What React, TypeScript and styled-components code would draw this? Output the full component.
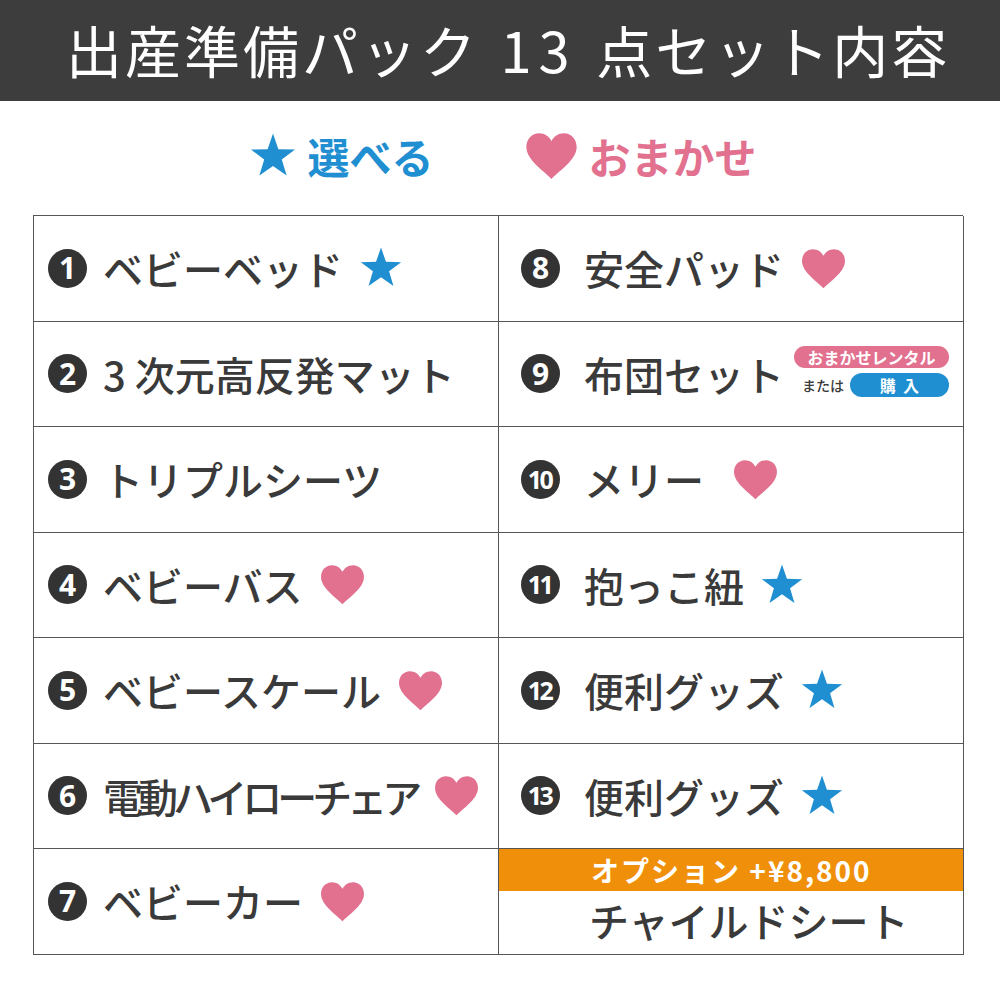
import React from "react";
import styled, { createGlobalStyle } from "styled-components";

const COLORS = {
  Dark: "#3d3d3d",
  Text: "#3a3a3a",
  Line: "#555555",
  Blue: "#1f8fd2",
  Pink: "#e2708f",
  Orange: "#f0900a",
};

const GlobalStyle = createGlobalStyle`
  html, body {
    margin: 0;
    padding: 0;
    background: #ffffff;
  }
  body {
    font-family: "Noto Sans CJK JP", "Noto Sans", sans-serif;
    color: ${COLORS.Text};
  }
  * {
    box-sizing: border-box;
  }
`;

const Page = styled.div`
  width: 1000px;
  height: 1000px;
  display: flex;
  flex-direction: column;
  background: #ffffff;
`;

const Header = styled.header`
  height: 101px;
  background: ${COLORS.Dark};
  display: flex;
  align-items: center;
  justify-content: center;
  padding-left: 16px;
  padding-bottom: 4px;
`;

const Title = styled.h1`
  margin: 0;
  font-weight: 400;
  font-size: 56px;
  line-height: 1;
  letter-spacing: 3px;
  color: #ffffff;
  white-space: nowrap;
`;

const Digits = styled.span`
  letter-spacing: 7px;
  margin-left: 2px;
`;

const Legend = styled.div`
  height: 114px;
  display: flex;
  align-items: center;
  justify-content: center;
  gap: 90px;
  padding-left: 6px;
  padding-bottom: 4px;
`;

const LegendItem = styled.div<{ color: string }>`
  display: flex;
  align-items: center;
  gap: 10px;
  color: ${(props) => props.color};
  font-weight: 700;
  font-size: 42px;
  line-height: 1;
`;

const Table = styled.div`
  margin-left: 33px;
  width: 930px;
  display: grid;
  grid-template-columns: 465px 465px;
  grid-auto-rows: 105.5px;
  border-top: 1.5px solid ${COLORS.Line};
  border-left: 1.5px solid ${COLORS.Line};
`;

const Cell = styled.div<{ side: "left" | "right" }>`
  display: flex;
  align-items: center;
  padding-left: ${(props) => (props.side === "left" ? "14px" : "22px")};
  border-right: 1.5px solid ${COLORS.Line};
  border-bottom: 1.5px solid ${COLORS.Line};
  overflow: hidden;
`;

const NumberBadge = styled.span<{ wide: boolean }>`
  flex: none;
  width: 39px;
  height: 39px;
  border-radius: 50%;
  background: #333333;
  color: #ffffff;
  display: flex;
  align-items: center;
  justify-content: center;
  font-family: "Noto Sans", "DejaVu Sans", sans-serif;
  font-weight: 700;
  font-size: ${(props) => (props.wide ? "25px" : "30px")};
  letter-spacing: ${(props) => (props.wide ? "-2.5px" : "0")};
  line-height: 1;
  padding-right: ${(props) => (props.wide ? "2px" : "0")};
`;

const ItemName = styled.span<{ side: "left" | "right"; tracking: number }>`
  margin-left: ${(props) => (props.side === "left" ? "16px" : "24px")};
  font-size: 40px;
  font-weight: 500;
  line-height: 1;
  letter-spacing: ${(props) => props.tracking}px;
  white-space: nowrap;
  color: ${COLORS.Text};
`;

const MarkWrap = styled.span<{ gap: number }>`
  display: flex;
  margin-left: ${(props) => props.gap}px;
`;

const BadgeColumn = styled.div`
  margin-left: 10px;
  display: flex;
  flex-direction: column;
  align-items: flex-end;
  gap: 5px;
  margin-top: -4px;
`;

const Pill = styled.span<{ color: string; width: number; height: number }>`
  display: flex;
  align-items: center;
  justify-content: center;
  width: ${(props) => props.width}px;
  height: ${(props) => props.height}px;
  border-radius: 12px;
  background: ${(props) => props.color};
  color: #ffffff;
  font-weight: 700;
  font-size: 16px;
  line-height: 1;
  white-space: nowrap;
`;

const OrRow = styled.div`
  display: flex;
  align-items: center;
  gap: 6px;
`;

const OrText = styled.span`
  font-size: 14px;
  font-weight: 500;
  color: ${COLORS.Text};
`;

const OptionCell = styled.div`
  display: flex;
  flex-direction: column;
  border-right: 1.5px solid ${COLORS.Line};
  border-bottom: 1.5px solid ${COLORS.Line};
`;

const OptionBar = styled.div`
  height: 42px;
  background: ${COLORS.Orange};
  color: #ffffff;
  display: flex;
  align-items: center;
  padding-left: 92px;
  font-weight: 700;
  font-size: 28px;
  letter-spacing: 2px;
  line-height: 1;
  white-space: nowrap;
`;

const OptionName = styled.div`
  flex: 1;
  display: flex;
  align-items: center;
  padding-left: 90px;
  padding-bottom: 4px;
  font-size: 40px;
  font-weight: 500;
  line-height: 1;
  white-space: nowrap;
`;

const Star: React.FC<{ size: number }> = ({ size }) => (
  <svg width={size} height={size} viewBox="0 0 24 24">
    <polygon
      fill={COLORS.Blue}
      points="12,0.8 14.7,8.6 23,8.8 16.4,13.8 18.8,21.8 12,17 5.2,21.8 7.6,13.8 1,8.8 9.3,8.6"
    />
  </svg>
);

const Heart: React.FC<{ width: number; height: number }> = ({
  width,
  height,
}) => (
  <svg width={width} height={height} viewBox="0 0 24 21">
    <path
      fill={COLORS.Pink}
      d="M12 20.6 C9.5 17.6 1 12.6 1 6.6 C1 3.2 3.4 0.6 6.6 0.6 C9 0.6 11 2 12 4 C13 2 15 0.6 17.4 0.6 C20.6 0.6 23 3.2 23 6.6 C23 12.6 14.5 17.6 12 20.6 Z"
    />
  </svg>
);

type Mark = "star" | "heart" | "none" | "badge";

type Item = {
  no: number;
  name: string;
  mark: Mark;
  gap?: number;
  tracking?: number;
};

const leftItems: Item[] = [
  { no: 1, name: "ベビーベッド", mark: "star" },
  { no: 2, name: "3 次元高反発マット", mark: "none" },
  { no: 3, name: "トリプルシーツ", mark: "none" },
  { no: 4, name: "ベビーバス", mark: "heart" },
  { no: 5, name: "ベビースケール", mark: "heart" },
  { no: 6, name: "電動ハイローチェア", mark: "heart", tracking: -5 },
  { no: 7, name: "ベビーカー", mark: "heart" },
];

const rightItems: Item[] = [
  { no: 8, name: "安全パッド", mark: "heart" },
  { no: 9, name: "布団セット", mark: "badge" },
  { no: 10, name: "メリー", mark: "heart", gap: 28 },
  { no: 11, name: "抱っこ紐", mark: "star" },
  { no: 12, name: "便利グッズ", mark: "star" },
  { no: 13, name: "便利グッズ", mark: "star" },
];

const ItemCell: React.FC<{ item: Item; side: "left" | "right" }> = ({
  item,
  side,
}) => {
  const gap = item.gap ?? 16;
  return (
    <Cell side={side}>
      <NumberBadge wide={item.no >= 10}>{item.no}</NumberBadge>
      <ItemName side={side} tracking={item.tracking ?? 0}>
        {item.name}
      </ItemName>
      {item.mark === "star" && (
        <MarkWrap gap={gap}>
          <Star size={44} />
        </MarkWrap>
      )}
      {item.mark === "heart" && (
        <MarkWrap gap={gap}>
          <Heart width={47} height={41} />
        </MarkWrap>
      )}
      {item.mark === "badge" && (
        <BadgeColumn>
          <Pill color={COLORS.Pink} width={155} height={22}>
            おまかせレンタル
          </Pill>
          <OrRow>
            <OrText>または</OrText>
            <Pill color={COLORS.Blue} width={99} height={24}>
              購&nbsp;&nbsp;入
            </Pill>
          </OrRow>
        </BadgeColumn>
      )}
    </Cell>
  );
};

const App: React.FC = () => {
  const cells: React.ReactNode[] = [];
  leftItems.forEach((left, i) => {
    cells.push(<ItemCell key={`l${left.no}`} item={left} side="left" />);
    const right = rightItems[i];
    if (right) {
      cells.push(<ItemCell key={`r${right.no}`} item={right} side="right" />);
    } else {
      cells.push(
        <OptionCell key="option">
          <OptionBar>オプション +¥8,800</OptionBar>
          <OptionName>チャイルドシート</OptionName>
        </OptionCell>
      );
    }
  });

  return (
    <Page>
      <GlobalStyle />
      <Header>
        <Title>
          出産準備パック<Digits> 13 </Digits>点セット内容
        </Title>
      </Header>
      <Legend>
        <LegendItem color={COLORS.Blue}>
          <Star size={48} />
          選べる
        </LegendItem>
        <LegendItem color={COLORS.Pink}>
          <Heart width={55} height={48} />
          おまかせ
        </LegendItem>
      </Legend>
      <Table>{cells}</Table>
    </Page>
  );
};

export default App;
